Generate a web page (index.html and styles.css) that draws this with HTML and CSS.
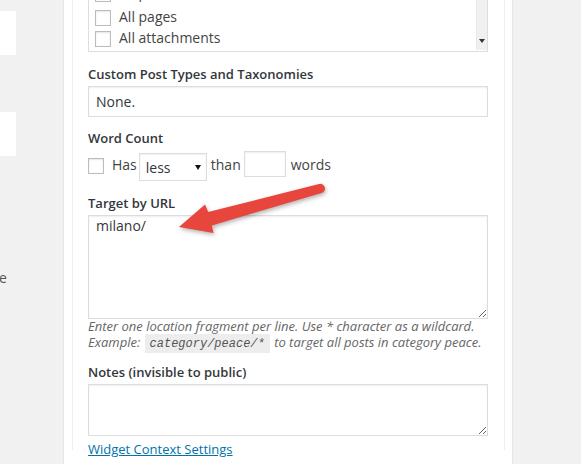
FILE: index.html
```html
<!DOCTYPE html>
<html lang="en">
<head>
<meta charset="utf-8">
<title>Widget Context</title>
<link rel="stylesheet" href="styles.css">
</head>
<body>
<div class="screen">
  <aside class="side">
    <div class="side-box side-box-first"></div>
    <div class="side-box side-box-second"></div>
    <div class="side-text">e</div>
  </aside>

  <div class="widget">
    <div class="widget-inside">
      <div class="list-box">
        <div class="list-items">
          <label class="item item-first"><input type="checkbox" class="cb"><span class="item-text">All posts</span></label>
          <label class="item"><input type="checkbox" class="cb"><span class="item-text">All pages</span></label>
          <label class="item"><input type="checkbox" class="cb"><span class="item-text">All attachments</span></label>
        </div>
        <div class="scroll"><span class="scroll-arrow"></span></div>
      </div>

      <p class="field-label label-cpt">Custom Post Types and Taxonomies</p>
      <input type="text" class="text-input" value="None.">

      <p class="field-label label-wc">Word Count</p>
      <div class="wc-row">
        <input type="checkbox" class="cb wc-cb">
        <span class="wc-text wc-has">Has</span>
        <div class="select"><span class="select-value">less</span><span class="caret"></span></div>
        <span class="wc-text wc-than">than</span>
        <input type="text" class="num-input">
        <span class="wc-text wc-words">words</span>
      </div>

      <p class="field-label label-url">Target by URL</p>
      <textarea class="area area-url">milano/</textarea>
      <p class="desc">Enter one location fragment per line. Use * character as a wildcard.<br>Example: <code>category/peace/*</code> to target all posts in category peace.</p>

      <p class="field-label label-notes">Notes (invisible to public)</p>
      <textarea class="area area-notes"></textarea>

      <p class="settings"><a href="#" class="settings-link">Widget Context Settings</a></p>
    </div>
  </div>

  <svg class="arrow" width="581" height="464" viewBox="0 0 581 464" aria-hidden="true">
    <path d="M179 227 L205 204.5 L208.2 212 L319 184 A4.6 4.6 0 0 1 321.6 193 L211.8 225.4 L213.5 233 Z" fill="#e8453c"/>
  </svg>
</div>
</body>
</html>
```

FILE: styles.css
```css
* {
  box-sizing: border-box;
}

html, body {
  margin: 0;
  padding: 0;
}

body {
  background: #f1f1f1;
  font-family: "Open Sans", "Liberation Sans", sans-serif;
  color: #32373c;
}

.screen {
  position: relative;
  display: flex;
  width: 581px;
  height: 464px;
  overflow: hidden;
}

/* left column */
.side {
  width: 63px;
  flex: none;
  display: flex;
  flex-direction: column;
  align-items: flex-start;
}

.side-box {
  width: 16px;
  height: 44px;
  background: #fff;
}

.side-box-first {
  margin-top: 11px;
}

.side-box-second {
  margin-top: 57px;
}

.side-text {
  margin-top: 113px;
  margin-left: -1px;
  font-size: 14px;
  line-height: 18px;
  color: #555;
}

/* widget */
.widget {
  width: 450px;
  flex: none;
  background: #fff;
  border-left: 1px solid #e5e5e5;
  border-right: 1px solid #e5e5e5;
  padding: 0 7px 0 8px;
}

.widget-inside {
  height: 100%;
  border-left: 1px solid #eeeeee;
  border-right: 1px solid #eeeeee;
  padding: 0 16px 0 15px;
}

.list-box {
  margin-top: -14px;
  display: flex;
  border: 1px solid #dddddd;
  padding-bottom: 1px;
}

.list-items {
  flex: 1;
  padding-left: 6px;
}

.item {
  display: flex;
  align-items: flex-start;
  height: 21px;
  font-size: 14px;
  color: #444;
}

.item-first {
  height: 21px;
  margin-top: -3px;
  margin-bottom: 3px;
}

.item-text {
  line-height: 18px;
  margin-left: 8px;
}

.cb {
  -webkit-appearance: none;
  appearance: none;
  width: 16px;
  height: 16px;
  margin: 2px 0 0 0;
  border: 1px solid #b9bdc1;
  background: #fff;
  box-shadow: inset 0 1px 2px rgba(0, 0, 0, 0.1);
  flex: none;
}

.scroll {
  width: 11px;
  flex: none;
  background: #f0f0f0;
  border-left: 1px solid #e8e8e8;
  display: flex;
  flex-direction: column;
  justify-content: flex-end;
  align-items: center;
  padding-bottom: 7px;
}

.scroll-arrow {
  width: 0;
  height: 0;
  border-left: 3px solid transparent;
  border-right: 3px solid transparent;
  border-top: 4px solid #333;
}

.field-label {
  margin: 0;
  font-size: 13px;
  font-weight: 600;
  line-height: 18px;
  color: #32373c;
}

.label-cpt {
  margin-top: 13px;
}

.label-wc {
  margin-top: 12px;
}

.label-url {
  margin-top: 13px;
}

.label-notes {
  margin-top: 11px;
}

.text-input {
  display: block;
  width: 100%;
  height: 31px;
  margin: 3px 0 0 0;
  padding: 0 7px;
  border: 1px solid #dddddd;
  box-shadow: inset 0 1px 2px rgba(0, 0, 0, 0.07);
  background: #fff;
  font-family: "Open Sans", "Liberation Sans", sans-serif;
  font-size: 14px;
  color: #32373c;
  outline: none;
}

.wc-row {
  margin-top: 4px;
  display: flex;
  align-items: flex-start;
  font-size: 14px;
  color: #444;
}

.wc-cb {
  margin-top: 7px;
}

.wc-text {
  line-height: 18px;
  margin-top: 5px;
}

.wc-has {
  margin-left: 8px;
}

.select {
  margin: 2px 0 0 2px;
  width: 68px;
  height: 28px;
  border: 1px solid #dddddd;
  box-shadow: inset 0 1px 2px rgba(0, 0, 0, 0.07);
  background: #fff;
  display: flex;
  align-items: center;
  justify-content: space-between;
  padding: 0 5px 0 6px;
  font-size: 14px;
  color: #32373c;
}

.select-value {
  line-height: 18px;
  margin-top: 2px;
}

.caret {
  width: 0;
  height: 0;
  border-left: 3.5px solid transparent;
  border-right: 3.5px solid transparent;
  border-top: 5px solid #111;
}

.wc-than {
  margin-left: 4px;
}

.num-input {
  margin: 0 0 0 3px;
  width: 42px;
  height: 26px;
  padding: 0;
  border: 1px solid #dddddd;
  box-shadow: inset 0 1px 2px rgba(0, 0, 0, 0.07);
  background: #fff;
  outline: none;
}

.wc-words {
  margin-left: 5px;
}

.area {
  display: block;
  width: 100%;
  margin: 3px 0 0 0;
  padding: 1px 7px;
  border: 1px solid #dddddd;
  box-shadow: inset 0 1px 2px rgba(0, 0, 0, 0.07);
  background: #fff;
  font-family: "Open Sans", "Liberation Sans", sans-serif;
  font-size: 14px;
  line-height: 17px;
  color: #32373c;
  resize: vertical;
  outline: none;
}

.area-url {
  height: 104px;
}

.area-notes {
  height: 52px;
}

.desc {
  margin: -1px 0 0 0;
  font-size: 13px;
  font-style: italic;
  line-height: 16px;
  color: #666;
}

.desc code {
  font-family: "Liberation Mono", "DejaVu Sans Mono", monospace;
  font-size: 12px;
  font-style: italic;
  background: rgba(0, 0, 0, 0.07);
  padding: 3px 5px 2px;
  margin: 0 1px;
  color: #555;
}

.settings {
  margin: 4px 0 0 0;
  font-size: 13px;
  line-height: 18px;
}

.settings-link {
  color: #0073aa;
  text-decoration: underline;
}

.arrow {
  position: absolute;
  left: 0;
  top: 0;
  pointer-events: none;
  filter: drop-shadow(1px 2px 2px rgba(0, 0, 0, 0.3));
}
```
